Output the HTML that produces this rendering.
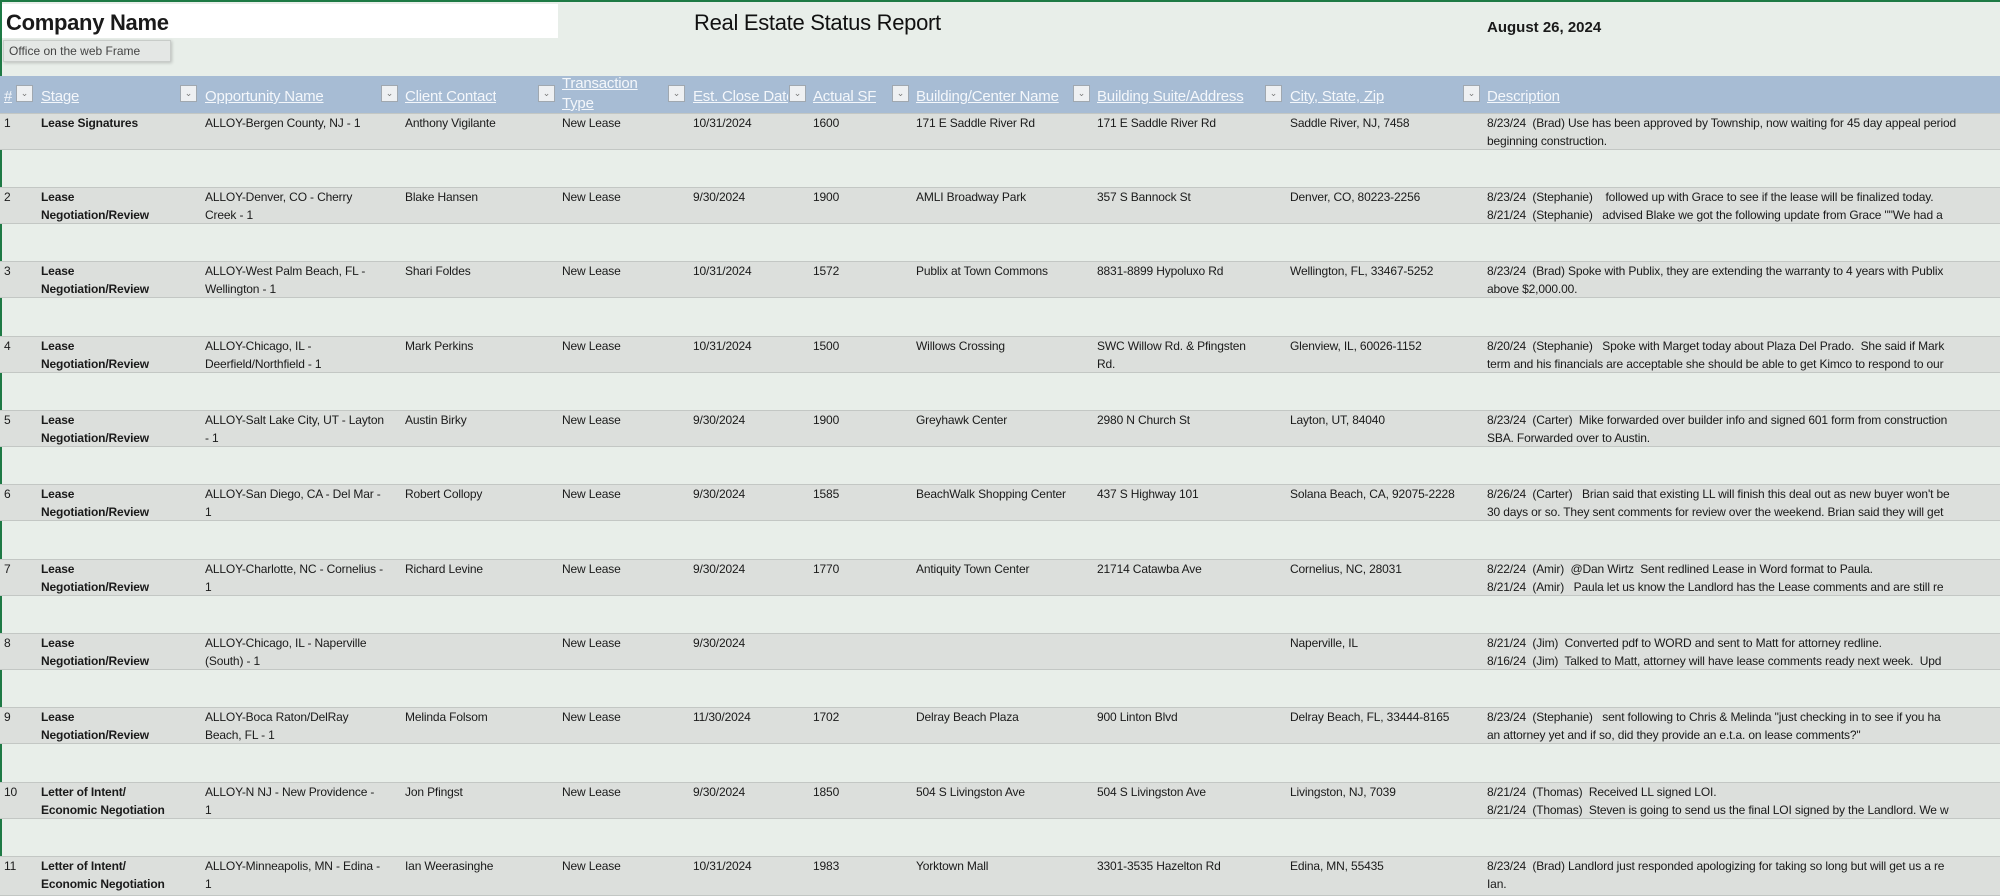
<!DOCTYPE html>
<html><head><meta charset="utf-8"><style>
*{margin:0;padding:0;box-sizing:border-box}
body{width:2000px;height:893px;overflow:hidden;background:#e8eee9;font-family:"Liberation Sans",sans-serif;position:relative;color:#1a1a1a}
.top{position:absolute;left:0;top:0;width:2000px;height:2px;background:#1e7a45}
.lb{position:absolute;left:0;top:0;width:2px;height:893px;background:#1e7a45}
.cn{position:absolute;left:2px;top:4px;width:556px;height:34px;background:#fff;font-size:22px;font-weight:bold;padding:6px 4px;letter-spacing:-0.3px}
.tip{position:absolute;left:3px;top:40px;width:168px;height:22px;background:#e4e7e5;border:1px solid #c8ccc9;box-shadow:1px 1px 3px rgba(0,0,0,.2);font-size:12px;color:#444;padding:3px 5px}
.title{position:absolute;left:694px;top:10px;font-size:22px;letter-spacing:-0.3px;color:#111}
.date{position:absolute;left:1487px;top:19px;font-size:15px;font-weight:bold}
.hdr{position:absolute;left:0;top:76px;width:2000px;height:37px;background:#a7bcd4}
.h{position:absolute;top:12px;color:#f4f7fb;font-size:15px;text-decoration:underline;white-space:nowrap;overflow:hidden;letter-spacing:-0.2px}
.fb{position:absolute;top:9px;width:17px;height:17px;background:#eef0f2;border:1px solid #a0a8b0;font-size:9px;color:#777;text-align:center;line-height:14px}
.row{position:absolute;left:0;width:2000px;height:37px;background:#dcdfdc;border-top:1px solid #c3c7c4;border-bottom:1px solid #c3c7c4}
.c{position:absolute;top:0px;font-size:12px;line-height:18px;letter-spacing:-0.15px;white-space:nowrap}
.b{font-weight:bold}
</style></head><body>
<div class="top"></div><div class="lb"></div>
<div class="cn">Company Name</div>
<div class="tip">Office on the web Frame</div>
<div class="title">Real Estate Status Report</div>
<div class="date">August 26, 2024</div>
<div class="hdr">
<div class="h" style="left:4px">#</div><div class="fb" style="left:16px">&#8964;</div>
<div class="h" style="left:41px">Stage</div><div class="fb" style="left:180px">&#8964;</div>
<div class="h" style="left:205px">Opportunity Name</div><div class="fb" style="left:381px">&#8964;</div>
<div class="h" style="left:405px">Client Contact</div><div class="fb" style="left:538px">&#8964;</div>
<div class="h" style="left:562px;top:-2px;line-height:20px;white-space:normal;width:95px;height:37px">Transaction Type</div><div class="fb" style="left:668px">&#8964;</div>
<div class="h" style="left:693px;width:95px">Est. Close Date</div><div class="fb" style="left:789px">&#8964;</div>
<div class="h" style="left:813px">Actual SF</div><div class="fb" style="left:892px">&#8964;</div>
<div class="h" style="left:916px;width:157px">Building/Center Name</div><div class="fb" style="left:1073px">&#8964;</div>
<div class="h" style="left:1097px;width:168px">Building Suite/Address</div><div class="fb" style="left:1265px">&#8964;</div>
<div class="h" style="left:1290px">City, State, Zip</div><div class="fb" style="left:1463px">&#8964;</div>
<div class="h" style="left:1487px">Description</div>
</div>

<div class="row" style="top:113px"><div class="c" style="left:4px">1</div><div class="c b" style="left:41px">Lease Signatures</div><div class="c" style="left:205px">ALLOY-Bergen County, NJ - 1</div><div class="c" style="left:405px">Anthony Vigilante</div><div class="c" style="left:562px">New Lease</div><div class="c" style="left:693px">10/31/2024</div><div class="c" style="left:813px">1600</div><div class="c" style="left:916px">171 E Saddle River Rd</div><div class="c" style="left:1097px">171 E Saddle River Rd</div><div class="c" style="left:1290px">Saddle River, NJ, 7458</div><div class="c" style="left:1487px">8/23/24&nbsp; (Brad) Use has been approved by Township, now waiting for 45 day appeal period<br>beginning construction.</div></div>

<div class="row" style="top:187px"><div class="c" style="left:4px">2</div><div class="c b" style="left:41px">Lease<br>Negotiation/Review</div><div class="c" style="left:205px">ALLOY-Denver, CO - Cherry<br>Creek - 1</div><div class="c" style="left:405px">Blake Hansen</div><div class="c" style="left:562px">New Lease</div><div class="c" style="left:693px">9/30/2024</div><div class="c" style="left:813px">1900</div><div class="c" style="left:916px">AMLI Broadway Park</div><div class="c" style="left:1097px">357 S Bannock St</div><div class="c" style="left:1290px">Denver, CO, 80223-2256</div><div class="c" style="left:1487px">8/23/24&nbsp; (Stephanie)&nbsp;&nbsp;&nbsp; followed up with Grace to see if the lease will be finalized today.<br>8/21/24&nbsp; (Stephanie)&nbsp;&nbsp; advised Blake we got the following update from Grace ""We had a</div></div>

<div class="row" style="top:261px"><div class="c" style="left:4px">3</div><div class="c b" style="left:41px">Lease<br>Negotiation/Review</div><div class="c" style="left:205px">ALLOY-West Palm Beach, FL -<br>Wellington - 1</div><div class="c" style="left:405px">Shari Foldes</div><div class="c" style="left:562px">New Lease</div><div class="c" style="left:693px">10/31/2024</div><div class="c" style="left:813px">1572</div><div class="c" style="left:916px">Publix at Town Commons</div><div class="c" style="left:1097px">8831-8899 Hypoluxo Rd</div><div class="c" style="left:1290px">Wellington, FL, 33467-5252</div><div class="c" style="left:1487px">8/23/24&nbsp; (Brad) Spoke with Publix, they are extending the warranty to 4 years with Publix<br>above $2,000.00.</div></div>

<div class="row" style="top:336px"><div class="c" style="left:4px">4</div><div class="c b" style="left:41px">Lease<br>Negotiation/Review</div><div class="c" style="left:205px">ALLOY-Chicago, IL -<br>Deerfield/Northfield - 1</div><div class="c" style="left:405px">Mark Perkins</div><div class="c" style="left:562px">New Lease</div><div class="c" style="left:693px">10/31/2024</div><div class="c" style="left:813px">1500</div><div class="c" style="left:916px">Willows Crossing</div><div class="c" style="left:1097px">SWC Willow Rd. &amp; Pfingsten<br>Rd.</div><div class="c" style="left:1290px">Glenview, IL, 60026-1152</div><div class="c" style="left:1487px">8/20/24&nbsp; (Stephanie)&nbsp;&nbsp; Spoke with Marget today about Plaza Del Prado.&nbsp; She said if Mark<br>term and his financials are acceptable she should be able to get Kimco to respond to our</div></div>

<div class="row" style="top:410px"><div class="c" style="left:4px">5</div><div class="c b" style="left:41px">Lease<br>Negotiation/Review</div><div class="c" style="left:205px">ALLOY-Salt Lake City, UT - Layton<br>- 1</div><div class="c" style="left:405px">Austin Birky</div><div class="c" style="left:562px">New Lease</div><div class="c" style="left:693px">9/30/2024</div><div class="c" style="left:813px">1900</div><div class="c" style="left:916px">Greyhawk Center</div><div class="c" style="left:1097px">2980 N Church St</div><div class="c" style="left:1290px">Layton, UT, 84040</div><div class="c" style="left:1487px">8/23/24&nbsp; (Carter)&nbsp; Mike forwarded over builder info and signed 601 form from construction<br>SBA. Forwarded over to Austin.</div></div>

<div class="row" style="top:484px"><div class="c" style="left:4px">6</div><div class="c b" style="left:41px">Lease<br>Negotiation/Review</div><div class="c" style="left:205px">ALLOY-San Diego, CA - Del Mar -<br>1</div><div class="c" style="left:405px">Robert Collopy</div><div class="c" style="left:562px">New Lease</div><div class="c" style="left:693px">9/30/2024</div><div class="c" style="left:813px">1585</div><div class="c" style="left:916px">BeachWalk Shopping Center</div><div class="c" style="left:1097px">437 S Highway 101</div><div class="c" style="left:1290px">Solana Beach, CA, 92075-2228</div><div class="c" style="left:1487px">8/26/24&nbsp; (Carter)&nbsp;&nbsp; Brian said that existing LL will finish this deal out as new buyer won't be<br>30 days or so. They sent comments for review over the weekend. Brian said they will get</div></div>

<div class="row" style="top:559px"><div class="c" style="left:4px">7</div><div class="c b" style="left:41px">Lease<br>Negotiation/Review</div><div class="c" style="left:205px">ALLOY-Charlotte, NC - Cornelius -<br>1</div><div class="c" style="left:405px">Richard Levine</div><div class="c" style="left:562px">New Lease</div><div class="c" style="left:693px">9/30/2024</div><div class="c" style="left:813px">1770</div><div class="c" style="left:916px">Antiquity Town Center</div><div class="c" style="left:1097px">21714 Catawba Ave</div><div class="c" style="left:1290px">Cornelius, NC, 28031</div><div class="c" style="left:1487px">8/22/24&nbsp; (Amir)&nbsp; @Dan Wirtz&nbsp; Sent redlined Lease in Word format to Paula.<br>8/21/24&nbsp; (Amir)&nbsp;&nbsp; Paula let us know the Landlord has the Lease comments and are still re</div></div>

<div class="row" style="top:633px"><div class="c" style="left:4px">8</div><div class="c b" style="left:41px">Lease<br>Negotiation/Review</div><div class="c" style="left:205px">ALLOY-Chicago, IL - Naperville<br>(South) - 1</div><div class="c" style="left:562px">New Lease</div><div class="c" style="left:693px">9/30/2024</div><div class="c" style="left:1290px">Naperville, IL</div><div class="c" style="left:1487px">8/21/24&nbsp; (Jim)&nbsp; Converted pdf to WORD and sent to Matt for attorney redline.<br>8/16/24&nbsp; (Jim)&nbsp; Talked to Matt, attorney will have lease comments ready next week.&nbsp; Upd</div></div>

<div class="row" style="top:707px"><div class="c" style="left:4px">9</div><div class="c b" style="left:41px">Lease<br>Negotiation/Review</div><div class="c" style="left:205px">ALLOY-Boca Raton/DelRay<br>Beach, FL - 1</div><div class="c" style="left:405px">Melinda Folsom</div><div class="c" style="left:562px">New Lease</div><div class="c" style="left:693px">11/30/2024</div><div class="c" style="left:813px">1702</div><div class="c" style="left:916px">Delray Beach Plaza</div><div class="c" style="left:1097px">900 Linton Blvd</div><div class="c" style="left:1290px">Delray Beach, FL, 33444-8165</div><div class="c" style="left:1487px">8/23/24&nbsp; (Stephanie)&nbsp;&nbsp; sent following to Chris &amp; Melinda "just checking in to see if you ha<br>an attorney yet and if so, did they provide an e.t.a. on lease comments?"</div></div>

<div class="row" style="top:782px"><div class="c" style="left:4px">10</div><div class="c b" style="left:41px">Letter of Intent/<br>Economic Negotiation</div><div class="c" style="left:205px">ALLOY-N NJ - New Providence -<br>1</div><div class="c" style="left:405px">Jon Pfingst</div><div class="c" style="left:562px">New Lease</div><div class="c" style="left:693px">9/30/2024</div><div class="c" style="left:813px">1850</div><div class="c" style="left:916px">504 S Livingston Ave</div><div class="c" style="left:1097px">504 S Livingston Ave</div><div class="c" style="left:1290px">Livingston, NJ, 7039</div><div class="c" style="left:1487px">8/21/24&nbsp; (Thomas)&nbsp; Received LL signed LOI.<br>8/21/24&nbsp; (Thomas)&nbsp; Steven is going to send us the final LOI signed by the Landlord. We w</div></div>

<div class="row" style="top:856px;height:40px"><div class="c" style="left:4px">11</div><div class="c b" style="left:41px">Letter of Intent/<br>Economic Negotiation</div><div class="c" style="left:205px">ALLOY-Minneapolis, MN - Edina -<br>1</div><div class="c" style="left:405px">Ian Weerasinghe</div><div class="c" style="left:562px">New Lease</div><div class="c" style="left:693px">10/31/2024</div><div class="c" style="left:813px">1983</div><div class="c" style="left:916px">Yorktown Mall</div><div class="c" style="left:1097px">3301-3535 Hazelton Rd</div><div class="c" style="left:1290px">Edina, MN, 55435</div><div class="c" style="left:1487px">8/23/24&nbsp; (Brad) Landlord just responded apologizing for taking so long but will get us a re<br>Ian.</div></div>
</body></html>
